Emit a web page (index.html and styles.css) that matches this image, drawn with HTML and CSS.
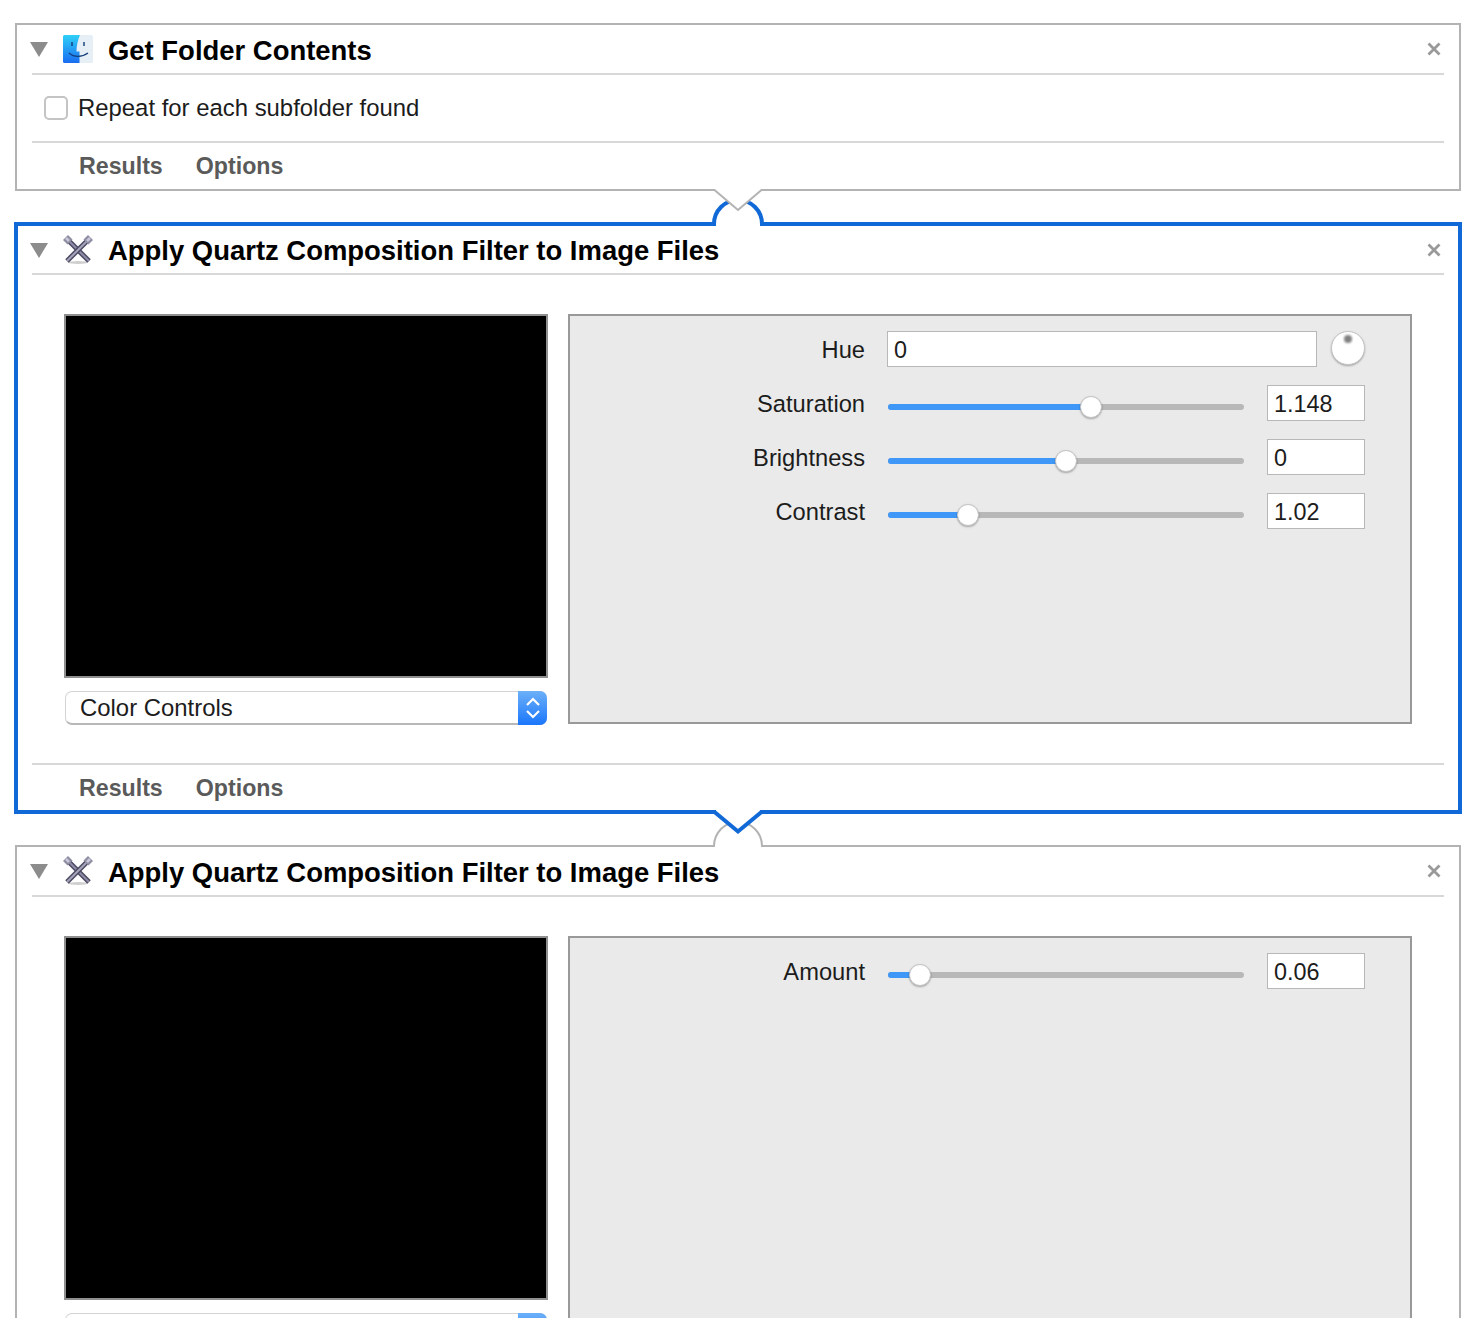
FILE: index.html
```html
<!DOCTYPE html>
<html lang="en">
<head>
    <meta charset="UTF-8" />
    <title>Workflow</title>
    <link rel="stylesheet" href="styles.css">
</head>
<body>
    <div class="page">

        <section class="card">
            <header class="card-head">
                <svg class="disclosure" viewBox="0 0 18 15"><path d="M0 0H18L9 15Z" /></svg>
                <svg class="action-icon" viewBox="0 0 30 28">
                    <defs>
                        <linearGradient id="finderBlue" x1="0" y1="0" x2="0" y2="1">
                            <stop offset="0" stop-color="#2fd0f8" />
                            <stop offset="1" stop-color="#1a6cf0" />
                        </linearGradient>
                    </defs>
                    <rect x="0" y="0" width="30" height="28" rx="1.5" fill="#e6eef6" />
                    <path d="M1.5 0H17C14.5 6 13.5 11 13.5 16.5H16.5V28H1.500A1.500 1.500 0 0 1 0 26.500V1.500A1.500 1.500 0 0 1 1.500 0Z" fill="url(#finderBlue)" />
                    <path d="M6 18C11 22.500 19 22.500 25 18" fill="none" stroke="#123a78" stroke-width="1.2" />
                    <path d="M9 7V11M21 7V11" stroke="#123a78" stroke-width="1.4" />
                </svg>
                <h2 class="card-title">Get Folder Contents</h2>
                <svg class="close" viewBox="0 0 14 14"><path d="M1.500 1.500L12.500 12.500M12.500 1.500L1.500 12.500" /></svg>
            </header>
            <div class="option-row">
                <span class="checkbox"></span>
                <span>Repeat for each subfolder found</span>
            </div>
            <footer class="card-foot">
                <span>Results</span>
                <span>Options</span>
            </footer>
        </section>

        <section class="card card-selected">
            <header class="card-head">
                <svg class="disclosure" viewBox="0 0 18 15"><path d="M0 0H18L9 15Z" /></svg>
                <svg class="action-icon" viewBox="0 0 30 30">
                    <ellipse cx="15" cy="27.500" rx="10" ry="1.500" fill="#cfcfcf" />
                    <path d="M5 5L26 26" stroke="#4c4a62" stroke-width="5" />
                    <path d="M5 5L26 26" stroke="#8f8da8" stroke-width="2" />
                    <path d="M25 5L4 26" stroke="#4c4a62" stroke-width="5" />
                    <path d="M25 5L4 26" stroke="#a5a4bb" stroke-width="2" />
                    <path d="M2.500 2.500L7 7" stroke="#8e8da3" stroke-width="7" />
                    <path d="M27.500 2.500L23 7" stroke="#8e8da3" stroke-width="7" />
                    <path d="M3 3L6 6M27 3L24 6" stroke="#c9c8d8" stroke-width="2.500" />
                </svg>
                <h2 class="card-title">Apply Quartz Composition Filter to Image Files</h2>
                <svg class="close" viewBox="0 0 14 14"><path d="M1.500 1.500L12.500 12.500M12.500 1.500L1.500 12.500" /></svg>
            </header>
            <div class="card-body">
                <div class="preview-col">
                    <div class="preview"></div>
                    <div class="popup">
                        <span class="popup-label">Color Controls</span>
                        <span class="popup-arrows">
                            <svg viewBox="0 0 14 22"><path d="M1 8L7 2L13 8M1 14L7 20L13 14" /></svg>
                        </span>
                    </div>
                </div>
                <div class="params">
                    <div class="param">
                        <label class="param-name">Hue</label>
                        <div class="field field-wide">0</div>
                        <span class="knob"></span>
                    </div>
                    <div class="param">
                        <label class="param-name">Saturation</label>
                        <div class="slider"><span class="slider-fill" style="width: 57%"></span><span class="slider-thumb" style="left: 57%"></span></div>
                        <div class="field">1.148</div>
                    </div>
                    <div class="param">
                        <label class="param-name">Brightness</label>
                        <div class="slider"><span class="slider-fill" style="width: 50%"></span><span class="slider-thumb" style="left: 50%"></span></div>
                        <div class="field">0</div>
                    </div>
                    <div class="param">
                        <label class="param-name">Contrast</label>
                        <div class="slider"><span class="slider-fill" style="width: 22.5%"></span><span class="slider-thumb" style="left: 22.5%"></span></div>
                        <div class="field">1.02</div>
                    </div>
                </div>
            </div>
            <footer class="card-foot">
                <span>Results</span>
                <span>Options</span>
            </footer>
        </section>

        <section class="card">
            <header class="card-head">
                <svg class="disclosure" viewBox="0 0 18 15"><path d="M0 0H18L9 15Z" /></svg>
                <svg class="action-icon" viewBox="0 0 30 30">
                    <ellipse cx="15" cy="27.500" rx="10" ry="1.500" fill="#cfcfcf" />
                    <path d="M5 5L26 26" stroke="#4c4a62" stroke-width="5" />
                    <path d="M5 5L26 26" stroke="#8f8da8" stroke-width="2" />
                    <path d="M25 5L4 26" stroke="#4c4a62" stroke-width="5" />
                    <path d="M25 5L4 26" stroke="#a5a4bb" stroke-width="2" />
                    <path d="M2.500 2.500L7 7" stroke="#8e8da3" stroke-width="7" />
                    <path d="M27.500 2.500L23 7" stroke="#8e8da3" stroke-width="7" />
                    <path d="M3 3L6 6M27 3L24 6" stroke="#c9c8d8" stroke-width="2.500" />
                </svg>
                <h2 class="card-title">Apply Quartz Composition Filter to Image Files</h2>
                <svg class="close" viewBox="0 0 14 14"><path d="M1.500 1.500L12.500 12.500M12.500 1.500L1.500 12.500" /></svg>
            </header>
            <div class="card-body">
                <div class="preview-col">
                    <div class="preview"></div>
                    <div class="popup">
                        <span class="popup-label"></span>
                        <span class="popup-arrows"></span>
                    </div>
                </div>
                <div class="params">
                    <div class="param">
                        <label class="param-name">Amount</label>
                        <div class="slider"><span class="slider-fill" style="width: 9%"></span><span class="slider-thumb" style="left: 9%"></span></div>
                        <div class="field">0.06</div>
                    </div>
                </div>
            </div>
        </section>

        <!-- joints between actions, they sit on top of the card borders -->
        <svg class="joint joint-top" viewBox="706 186 64 44">
            <rect x="715" y="186" width="46" height="5" fill="#fff" />
            <rect x="716" y="218" width="44" height="10" fill="#fff" />
            <path d="M714 226V224A24 24 0 0 1 762 224V226" fill="none" stroke="#1069d6" stroke-width="4" />
            <path d="M713 190H714.500L738 210L761.500 190H763" fill="#fff" stroke="#b3b3b3" stroke-width="2" />
        </svg>
        <svg class="joint joint-bottom" viewBox="706 806 64 44">
            <rect x="715" y="843" width="46" height="6" fill="#fff" />
            <rect x="716" y="806" width="44" height="6" fill="#fff" />
            <path d="M714 846V846A24 24 0 0 1 762 846V846" fill="none" stroke="#b3b3b3" stroke-width="2" />
            <path d="M713 812H714.500L738 831.500L761.500 812H763" fill="#fff" stroke="#1069d6" stroke-width="4" />
        </svg>
    </div>
</body>
</html>
```

FILE: styles.css
```css
html, body {
    margin: 0;
    background: #fff;
}

body {
    font-family: "Liberation Sans", Arial, sans-serif;
    font-size: 23.9px;
    color: #1c1c1c;
}

.page {
    position: relative;
    height: 1318px;
    padding-top: 23px;
    box-sizing: border-box;
    overflow: hidden;
}

.card {
    margin: 0 15px 31px;
    padding: 0 15px;
    border: 2px solid #b3b3b3;
    background: #fff;
}

.card-selected {
    margin: 0 14px 31px;
    padding: 0 14px;
    border: 4px solid #1069d6;
}

.card-head {
    display: flex;
    align-items: center;
    box-sizing: border-box;
    height: 50px;
    border-bottom: 2px solid #d8d8d8;
}

.card-selected .card-head {
    height: 49px;
}

.disclosure {
    width: 18px;
    height: 15px;
    margin: 1px 0 0 -2px;
    fill: #8c8c8c;
}

.action-icon {
    width: 30px;
    height: 30px;
    margin-left: 15px;
}

.card-title {
    flex: 1;
    margin: 4px 0 0 15px;
    font-size: 27.45px;
    font-weight: bold;
    color: #000;
}

.card-selected .card-title {
    margin-top: 3px;
}

.close {
    width: 14px;
    height: 14px;
    margin-right: 3px;
    fill: none;
    stroke: #999;
    stroke-width: 2.8;
}

.option-row {
    display: flex;
    align-items: center;
    gap: 10px;
    height: 66px;
    padding-left: 12px;
    border-bottom: 2px solid #d8d8d8;
}

.checkbox {
    box-sizing: border-box;
    width: 24px;
    height: 24px;
    border: 2px solid #c4c4c4;
    border-radius: 5px;
    background: #fff;
}

.card-foot {
    display: flex;
    align-items: center;
    gap: 33px;
    height: 46px;
    padding-left: 47px;
    font-size: 23.2px;
    font-weight: bold;
    color: #5a5a5a;
}

.card-selected .card-foot {
    box-sizing: border-box;
    height: 45px;
    padding-top: 2px;
}

.card-body {
    display: flex;
    gap: 20px;
    padding: 39px 32px 38px;
    border-bottom: 2px solid #d8d8d8;
}

.preview-col {
    width: 484px;
}

.preview {
    box-sizing: border-box;
    height: 364px;
    border: 2px solid #8f8f8f;
    background: #000;
}

.popup {
    display: flex;
    justify-content: space-between;
    box-sizing: border-box;
    height: 34px;
    margin: 13px 1px 0;
    border: 1px solid #d4d4d4;
    border-bottom: 2px solid #b8b8b8;
    border-radius: 7px;
    background: #fff;
}

.popup-label {
    padding-left: 14px;
    line-height: 32px;
}

.popup-arrows {
    display: flex;
    align-items: center;
    justify-content: center;
    width: 29px;
    margin: -1px -1px -2px 0;
    border-radius: 0 7px 7px 0;
    background: linear-gradient(#6cb0f9, #1a76fb);
}

.popup-arrows svg {
    width: 14px;
    height: 22px;
    fill: none;
    stroke: #fff;
    stroke-width: 2.2;
}

.params {
    box-sizing: border-box;
    display: flex;
    flex-direction: column;
    gap: 18px;
    width: 844px;
    height: 410px;
    padding: 15px 45px 0 0;
    border: 2px solid #999;
    background: #eaeaea;
}

.param {
    display: flex;
    align-items: center;
    height: 36px;
}

.param-name {
    width: 295px;
    margin: 2px 22px 0 0;
    font-size: 23.7px;
    text-align: right;
}

.field {
    box-sizing: border-box;
    width: 98px;
    height: 36px;
    padding-left: 6px;
    border: 1px solid #b8b8b8;
    background: #fff;
    font-size: 23.4px;
    line-height: 37px;
}

.field-wide {
    width: 430px;
}

.knob {
    position: relative;
    box-sizing: border-box;
    width: 34px;
    height: 34px;
    margin: -2px 0 0 14px;
    border: 1px solid #c6c6c6;
    border-radius: 50%;
    background: #fff;
    box-shadow: 0 1px 2px rgba(0, 0, 0, 0.3);
}

.knob::after {
    content: "";
    position: absolute;
    top: 3px;
    left: 12px;
    width: 8px;
    height: 8px;
    border-radius: 50%;
    background: #808080;
    filter: blur(1px);
}

.slider {
    position: relative;
    width: 356px;
    height: 6px;
    margin: 8px 23px 0 1px;
    border-radius: 3px;
    background: #b8b8b8;
}

.slider-fill {
    display: block;
    height: 100%;
    border-radius: 3px 0 0 3px;
    background: #3f98f8;
}

.slider-thumb {
    position: absolute;
    top: -8px;
    box-sizing: border-box;
    width: 22px;
    height: 22px;
    margin-left: -11px;
    border: 1px solid #c4c4c4;
    border-radius: 50%;
    background: #fff;
    box-shadow: 0 1px 2px rgba(0, 0, 0, 0.3);
}

.joint {
    position: absolute;
    left: 706px;
    width: 64px;
    height: 44px;
}

.joint-top {
    top: 186px;
}

.joint-bottom {
    top: 806px;
}
```
